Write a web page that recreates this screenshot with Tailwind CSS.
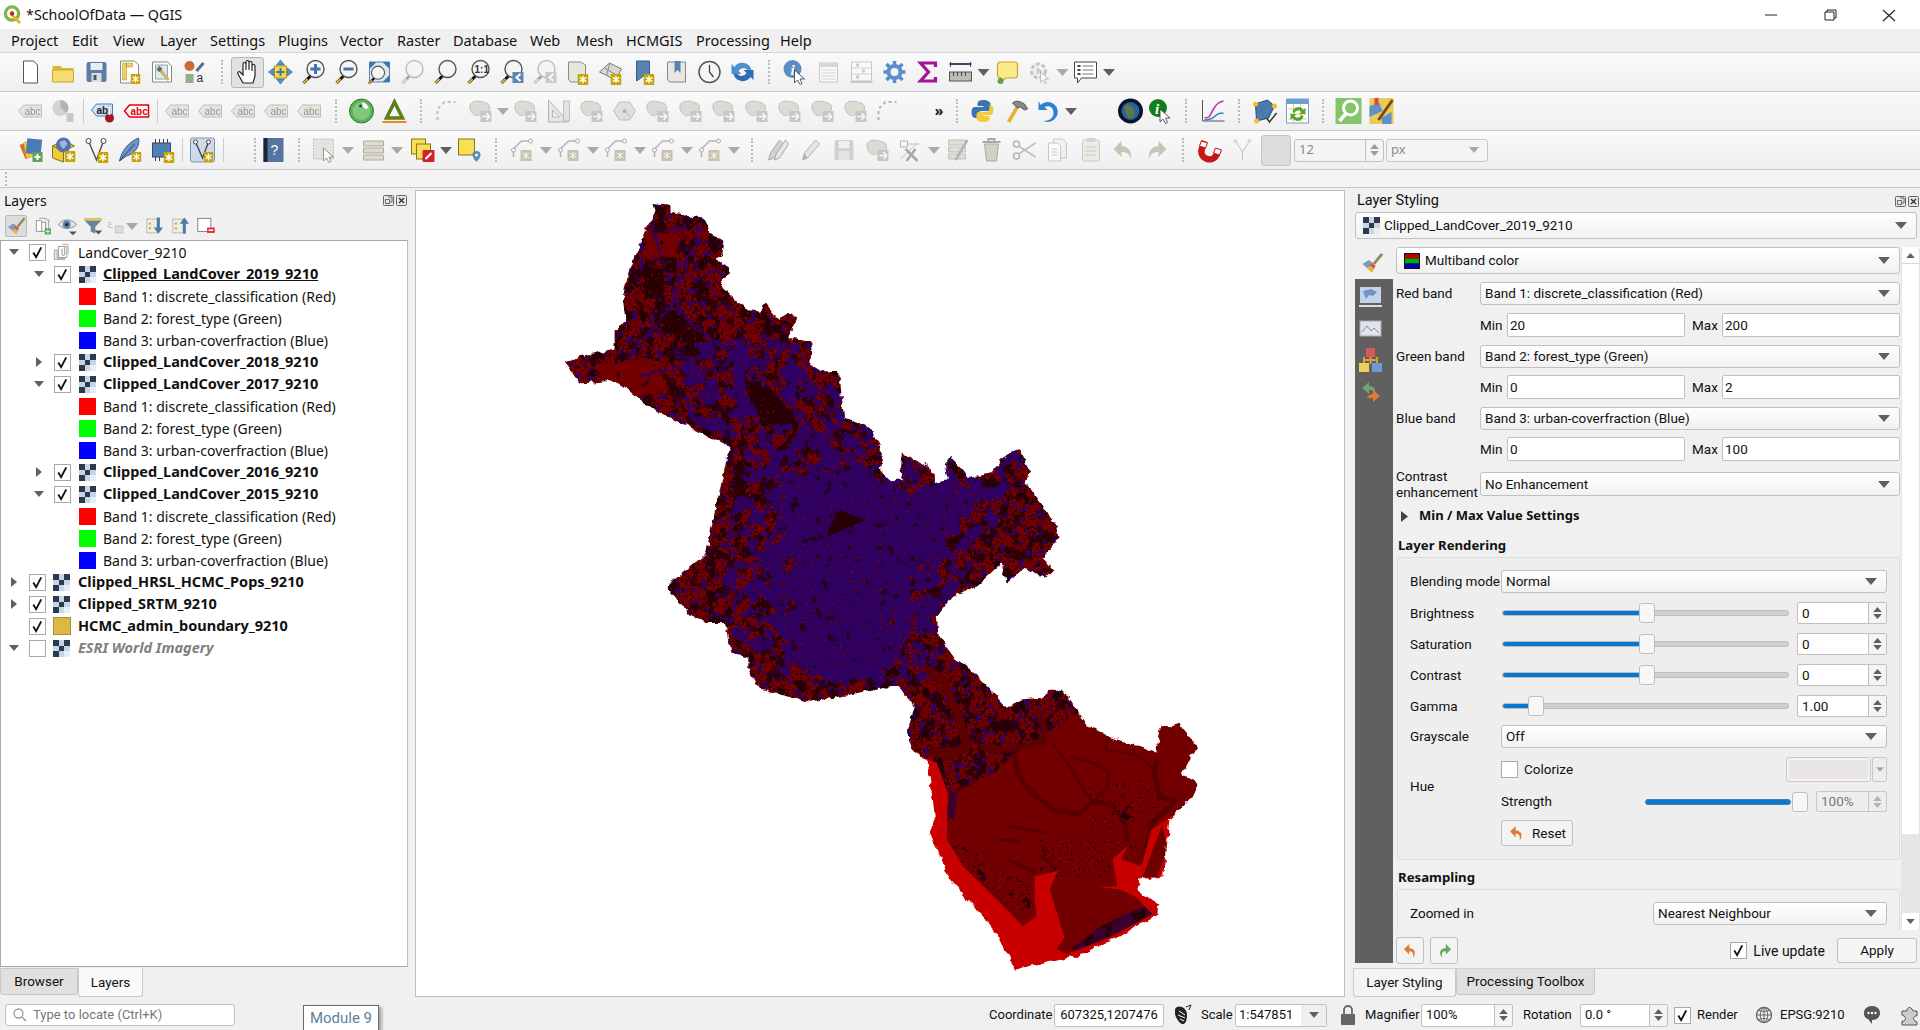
<!DOCTYPE html>
<html><head><meta charset="utf-8"><title>QGIS</title>
<script src="https://cdn.jsdelivr.net/npm/@tailwindcss/browser@4"></script></head>
<body class="w-[1920px] h-[1030px] overflow-hidden bg-[#f0f0f0] text-[14px] text-[#111] font-['Noto_Sans',sans-serif] flex flex-col">
<svg class="absolute w-0 h-0" aria-hidden="true"><defs>
<symbol id="dd" viewBox="0 0 12 7"><path d="M0 0h12L6 7z" fill="#606060"/></symbol>
<symbol id="ck" viewBox="0 0 16 16"><path d="M3.5 8l3 5L12 2.5" fill="none" stroke="#111" stroke-width="2"/></symbol>
<symbol id="ras" viewBox="0 0 17 17"><rect width="17" height="17" fill="#c7d6e6"/><path d="M0 0h6v6H0zM11 0h6v6h-6zM6 6h5v5H6zM0 11h6v6H0z" fill="#2c3a4d"/><path d="M11 11h6v6h-6z" fill="#e6edf5"/></symbol>
<symbol id="st" viewBox="0 0 10 10"><rect width="10" height="10" rx="1" fill="#c9a306"/><path d="M5 1.5v7M2 3l6 4M8 3L2 7" stroke="#fff" stroke-width="1.3"/></symbol>
<symbol id="new" viewBox="0 0 26 26"><path d="M6 2h10l4 4v18H6z" fill="#fff" stroke="#555"/></symbol>
<symbol id="open" viewBox="0 0 26 26"><path d="M2 7h8l2 2h11v14H2z" fill="#d9b93a"/><path d="M2 11h21v12H2z" fill="#f7dc6f" stroke="#c9a52c"/></symbol>
<symbol id="save" viewBox="0 0 26 26"><rect x="3" y="3" width="20" height="20" rx="2" fill="#5c7da3"/><rect x="7" y="4" width="12" height="7" fill="#e8edf2"/><rect x="8" y="14" width="10" height="9" fill="#d9dde2"/><rect x="10" y="16" width="3" height="5" fill="#44586e"/></symbol>
<symbol id="lay" viewBox="0 0 26 26"><path d="M4 2h14l4 4v18H4z" fill="#fff" stroke="#888"/><path d="M6 4h4v17H6zM10 4h6v4h-6z" fill="#edcf5f" stroke="#a98d20" stroke-width=".5"/><use href="#st" x="14" y="15" width="10" height="10"/></symbol>
<symbol id="lm" viewBox="0 0 26 26"><path d="M3 3h15l4 4v16H3z" fill="#fff" stroke="#888"/><path d="M6 6h12v14H6z" fill="#dfe7f2" stroke="#8aa"/><path d="M8 8l11 13" stroke="#d2b356" stroke-width="3"/><path d="M7 11l3-4 3 3-3 3z" fill="#666"/></symbol>
<symbol id="sty" viewBox="0 0 26 26"><circle cx="7" cy="7" r="5" fill="#c96a38"/><rect x="3" y="15" width="8" height="9" fill="#8fb089"/><path d="M14 12l7-8" stroke="#52708f" stroke-width="3"/><text x="14" y="23" font-size="12" font-family="Liberation Sans" fill="#333">a</text></symbol>
<symbol id="hand" viewBox="0 0 26 26"><path d="M8 24l-5-9c-1-2 1-3 2-2l3 3V5c0-2 2-2 3 0v6V3c0-2 3-2 3 0v8V4c0-2 3-2 3 0v8-5c0-2 3-2 3 0v10l-2 7z" fill="#fff" stroke="#222" stroke-width="1.2"/></symbol>
<symbol id="pts" viewBox="0 0 26 26"><path d="M7 7h12v12H7z" fill="#f3dd45" stroke="#a98d20"/><path d="M13 1l4 5H9zM13 25l4-5H9zM1 13l5-4v8zM25 13l-5-4v8z" fill="#5a8fc7" stroke="#2e5c8f" stroke-width=".6"/><path d="M9 13h8M13 9v8" stroke="#3f74ad" stroke-width="2"/></symbol>
<symbol id="mg" viewBox="0 0 26 26"><path d="M3 24l7-7" stroke="#111" stroke-width="3"/><path d="M3 24l4-4" stroke="#e4b92e" stroke-width="2"/><circle cx="15" cy="10" r="8.5" fill="#f5f5f5" stroke="#555" stroke-width="1.4"/></symbol>
<symbol id="zin" viewBox="0 0 26 26"><use href="#mg" width="26" height="26"/><path d="M10 10h10M15 5v10" stroke="#3f74ad" stroke-width="3"/></symbol>
<symbol id="zout" viewBox="0 0 26 26"><use href="#mg" width="26" height="26"/><path d="M10 10h10" stroke="#3f74ad" stroke-width="3"/></symbol>
<symbol id="zfull" viewBox="0 0 26 26"><path d="M3 3h20v20H3z" fill="#dfe7f0" stroke="#5a83ad"/><path d="M3 3h7l-7 7zM23 3h-7l7 7zM23 23h-7l7-7z" fill="#3f74ad"/><use href="#mg" width="20" height="20" y="6"/></symbol>
<symbol id="z11" viewBox="0 0 26 26"><use href="#mg" width="26" height="26"/><text x="9" y="14" font-size="10" font-weight="700" font-family="Liberation Sans" fill="#333">1:1</text></symbol>
<symbol id="zlast" viewBox="0 0 26 26"><use href="#mg" width="26" height="26"/><rect x="14" y="13" width="11" height="11" fill="#5e86b3"/><path d="M22 15l-4 3.5 4 3.5" stroke="#fff" stroke-width="2" fill="none"/></symbol>
<symbol id="map" viewBox="0 0 26 26"><path d="M4 3h12l5 3v17H6l-2-3z" fill="#e6e6e0" stroke="#8a8a80"/><use href="#st" x="13" y="15" width="11" height="11"/></symbol>
<symbol id="map3" viewBox="0 0 26 26"><path d="M2 13L12 4l12 6-6 11z" fill="#d8d8d0" stroke="#777"/><path d="M7 9l12 7M12 5l-3 12" stroke="#888"/><use href="#st" x="13" y="15" width="11" height="11"/></symbol>
<symbol id="bm" viewBox="0 0 26 26"><path d="M6 2h13v20l-6-5-7 5z" fill="#5a83b0" stroke="#355d85"/><use href="#st" x="13" y="15" width="11" height="11"/></symbol>
<symbol id="bm2" viewBox="0 0 26 26"><path d="M4 3h18v20H6l-2-3z" fill="#e8e8e0" stroke="#888"/><path d="M11 2h6v12l-3-3-3 3z" fill="#5a83b0"/></symbol>
<symbol id="clk" viewBox="0 0 26 26"><circle cx="13" cy="13" r="10.5" fill="#f5f5f5" stroke="#555" stroke-width="1.5"/><path d="M13 6v7l4 5" stroke="#444" fill="none" stroke-width="1.3"/></symbol>
<symbol id="ref" viewBox="0 0 26 26"><path d="M22 11A9.5 9.5 0 0 0 5 8L2 5v10h10l-3-3a5.5 5.5 0 0 1 9-1z" fill="#4d8fd1"/><path d="M4 15a9.5 9.5 0 0 0 17 3l3 3V11H14l3 3a5.5 5.5 0 0 1-9 1z" fill="#2c6fb5"/></symbol>
<symbol id="cur" viewBox="0 0 12 16"><path d="M1 1v13l3-3 2.5 4.5 2-1L6.5 10H11z" fill="#fff" stroke="#333" stroke-width=".8"/></symbol>
<symbol id="idn" viewBox="0 0 26 26"><circle cx="10" cy="10" r="9" fill="#5a8dc4"/><text x="8" y="16" font-size="15" font-weight="700" font-style="italic" font-family="Liberation Serif" fill="#fff">i</text><use href="#cur" x="11" y="10" width="12" height="16"/></symbol>
<symbol id="tbl" viewBox="0 0 26 26"><rect x="4" y="4" width="18" height="19" fill="#fff" stroke="#888"/><rect x="4" y="4" width="18" height="4" fill="#aaa"/><path d="M6 11h14M6 14h14M6 17h14M6 20h14" stroke="#aaa"/></symbol>
<symbol id="aba" viewBox="0 0 26 26"><rect x="3" y="3" width="20" height="19" fill="#fff" stroke="#888"/><path d="M3 9h20M3 15h20" stroke="#999"/><circle cx="9" cy="6" r="1.7" fill="#888"/><circle cx="15" cy="12" r="1.7" fill="#888"/><circle cx="9" cy="18" r="1.7" fill="#888"/><rect x="2" y="22" width="22" height="2" fill="#888"/></symbol>
<symbol id="gear" viewBox="0 0 26 26"><circle cx="13" cy="13" r="6" fill="none" stroke="#5b8ec8" stroke-width="4"/><path d="M13 2v22M2 13h22M5 5l16 16M21 5L5 21" stroke="#5b8ec8" stroke-width="3.5"/><circle cx="13" cy="13" r="4" fill="#f4f4f4"/></symbol>
<symbol id="sig" viewBox="0 0 26 26"><path d="M21 8V4H6l8 9-8 9h15v-4" fill="none" stroke="#a0149a" stroke-width="3.2"/></symbol>
<symbol id="rul" viewBox="0 0 26 26"><path d="M2 5h22" stroke="#2f4a6b" stroke-width="2"/><path d="M3 3v5M23 3v5" stroke="#2f4a6b"/><rect x="2" y="13" width="22" height="9" fill="#bbb" stroke="#555"/><path d="M6 13v4M10 13v4M14 13v4M18 13v4" stroke="#444"/></symbol>
<symbol id="tip" viewBox="0 0 26 26"><path d="M6 3h15q3 0 3 3v10q0 3-3 3H12l-3 3-1-3q-4 0-4-3V5z" fill="#fbe98a" stroke="#c9a52c" stroke-width="1.2"/><circle cx="7" cy="22" r="3" fill="#6a9a60"/></symbol>
<symbol id="gpl" viewBox="0 0 26 26"><circle cx="12" cy="12" r="7" fill="#eee" stroke="#888" stroke-width="3" stroke-dasharray="4 2"/><path d="M10 8l6 4-6 4z" fill="#999"/><use href="#cur" x="13" y="12" width="10" height="13"/></symbol>
<symbol id="note" viewBox="0 0 26 26"><path d="M2 3h22v16H9l-4 5v-5H2z" fill="#fff" stroke="#444"/><path d="M5 7h3M5 11h3M5 15h3" stroke="#444" stroke-width="2"/><path d="M10 7h11M10 11h11M10 15h11" stroke="#777"/></symbol>
<symbol id="abc" viewBox="0 0 26 26"><path d="M1 13l5-6h18v12H6z" fill="#dcdcd0" stroke="#999"/><text x="7" y="17" font-size="10" font-family="Liberation Sans" fill="#555">abc</text></symbol>
<symbol id="pie" viewBox="0 0 26 26"><circle cx="10" cy="10" r="8" fill="#bbb"/><path d="M10 2v8l6 5a8 8 0 0 0-6-13z" fill="#888"/><rect x="16" y="15" width="7" height="9" fill="#a8b0a8"/></symbol>
<symbol id="abp" viewBox="0 0 26 26"><path d="M1 12l5-6h16v12H6z" fill="#cfe3f8" stroke="#4a7fb5"/><text x="6" y="16" font-size="10" font-weight="700" font-family="Liberation Sans" fill="#222">ab</text><circle cx="19" cy="20" r="4.5" fill="#a31522"/><rect x="18" y="8" width="2" height="9" fill="#fff" stroke="#999" stroke-width=".4"/></symbol>
<symbol id="abr" viewBox="0 0 26 26"><path d="M1 13l5-6h19v12H6z" fill="#fff" stroke="#e3000f" stroke-width="1.5"/><text x="7" y="17" font-size="10" font-weight="700" font-family="Liberation Sans" fill="#e3000f">abc</text></symbol>
<symbol id="grn" viewBox="0 0 26 26"><circle cx="13" cy="13" r="12" fill="#5fae5c" stroke="#2a7a32"/><circle cx="13" cy="13" r="9" fill="#7fc779"/><path d="M14 4a9 9 0 0 1 6 6l-3 1-3-3z" fill="#fff"/><circle cx="12" cy="8" r="1.5" fill="#245"/></symbol>
<symbol id="tri" viewBox="0 0 26 26"><path d="M13 4l8 16H5z" fill="none" stroke="#5d7f1a" stroke-width="3.5"/><path d="M1 23h24v2H1z" fill="#e98a1f"/></symbol>
<symbol id="dsh" viewBox="0 0 26 26"><path d="M3 22V11l7-7h11" fill="none" stroke="#888" stroke-width="2" stroke-dasharray="3 3"/></symbol>
<symbol id="blob" viewBox="0 0 26 26"><path d="M3 6c3-4 9-3 12-2s7 1 7 6-4 6-7 6-5 3-8 1-6-7-4-11z" fill="#ccc9be" stroke="#999"/><rect x="13" y="13" width="11" height="11" fill="#aaa"/><path d="M15 18.5h7M19 15l3 3.5-3 3.5" stroke="#fff" stroke-width="1.5" fill="none"/></symbol>
<symbol id="sq" viewBox="0 0 26 26"><path d="M3 24V2l20 22zM7 19V12l7 7z" fill="#e0dfd8" fill-rule="evenodd" stroke="#888"/><path d="M18 3h6v20h-6z" fill="#d8d8d0" stroke="#999"/></symbol>
<symbol id="ang" viewBox="0 0 26 26"><path d="M8 22L2 13 8 4h10l6 9-6 9z" fill="#d4d2c8" stroke="#999"/><circle cx="13" cy="13" r="2" fill="#888"/><path d="M13 13l6 6" stroke="#888"/></symbol>
<symbol id="py" viewBox="0 0 26 26"><path d="M13 2c-4 0-6 1-6 4v2h6v1H5c-3 0-4 2-4 5s1 6 4 6h2v-3c0-3 2-4 5-4h5c2 0 3-1 3-3V6c0-2-3-4-7-4z" fill="#3a75b0"/><path d="M13 24c4 0 6-1 6-4v-2h-6v-1h7c2 0 3-2 3-5s-1-5-3-5h-1v3c0 3-2 4-5 4H9c-2 0-3 1-3 3v3c0 3 3 4 7 4z" fill="#f3cc3e"/></symbol>
<symbol id="ham" viewBox="0 0 26 26"><path d="M5 24L15 7" stroke="#e7b02f" stroke-width="3.5"/><path d="M9 5c4-3 7-2 12 1l3 5-3 1-4-3-3 1z" fill="#888" stroke="#555"/></symbol>
<symbol id="und" viewBox="0 0 26 26"><path d="M5 7a10 10 0 1 1 3 16c6 0 10-3 10-8s-4-8-9-6l3 3H3V3z" fill="#2f7fd5"/></symbol>
<symbol id="glb" viewBox="0 0 26 26"><circle cx="13" cy="13" r="12.5" fill="#06152f"/><circle cx="13" cy="13" r="9" fill="#2e5f96"/><path d="M7 8c4-3 7 0 9 3s2 7-2 9-6-4-6-6-2-4-1-6z" fill="#5a7a4a"/></symbol>
<symbol id="idg" viewBox="0 0 26 26"><circle cx="10" cy="10" r="9" fill="#11801c"/><text x="7" y="16" font-size="15" font-weight="700" font-style="italic" font-family="Liberation Serif" fill="#fff">i</text><use href="#cur" x="11" y="10" width="12" height="16"/></symbol>
<symbol id="chart" viewBox="0 0 26 26"><path d="M3 2v21h22" stroke="#555" fill="none"/><path d="M5 20c6 0 6-4 9-9s5-7 10-8" stroke="#c1349b" fill="none" stroke-width="1.5"/><path d="M5 22c6 0 9-2 12-5s4-1 7-2" stroke="#2a8fa8" fill="none" stroke-width="1.5"/></symbol>
<symbol id="nod" viewBox="0 0 26 26"><path d="M4 6l12-4 7 6-6 12-12 3z" fill="#4c79ae" stroke="#27496f"/><circle cx="4" cy="6" r="2.5" fill="#f2c22e"/><circle cx="23" cy="8" r="2.5" fill="#f2c22e"/><circle cx="5" cy="23" r="2.5" fill="#f2c22e"/><path d="M15 20l3 4 7-9" stroke="#333" fill="none" stroke-width="1.5"/></symbol>
<symbol id="tbg" viewBox="0 0 26 26"><rect x="2" y="1" width="22" height="24" fill="#fff" stroke="#6f9fd1"/><rect x="2" y="1" width="22" height="5" fill="#6f9fd1"/><path d="M4 11h18M4 16h18M4 21h18M9 6v19M16 6v19" stroke="#e5c65b"/><path d="M8 14a6 6 0 0 1 11-2l2-2v6h-6l2-2a4 4 0 0 0-7 1zM19 18a6 6 0 0 1-11 2l-2 2v-6h6l-2 2a4 4 0 0 0 7-1z" fill="#4fa53b"/></symbol>
<symbol id="gsq" viewBox="0 0 26 26"><rect width="26" height="26" fill="#85c46a"/><circle cx="15" cy="10" r="7" fill="none" stroke="#fff" stroke-width="3"/><path d="M4 23l7-8" stroke="#fff" stroke-width="3.5"/></symbol>
<symbol id="mpc" viewBox="0 0 26 26"><rect x="1" width="24" height="26" fill="#e9cc55"/><path d="M1 8l10-3 3 8-13 6zM13 20l10-6v12H14z" fill="#5e91c9"/><path d="M6 0h4v7H6z" fill="#d44"/><path d="M10 22L24 2" stroke="#7a4a1c" stroke-width="3"/></symbol>
<symbol id="addl" viewBox="0 0 26 26"><path d="M2 8l7-3 5 15-6 2z" fill="#d6702c"/><path d="M6 5l10-2 2 16-9 2z" fill="#f0ca3c"/><rect x="9" y="2" width="15" height="15" fill="#4b7bb5" transform="rotate(6 16 9)"/><rect x="15" y="15" width="10" height="10" fill="#5f9e5c"/><path d="M20 17v6M17 20h6" stroke="#fff" stroke-width="2"/></symbol>
<symbol id="wms" viewBox="0 0 26 26"><path d="M2 9l11-6 11 6-11 5z" fill="#e9c93c" stroke="#8a7120"/><path d="M2 9v12l11 4V14z" fill="#eccb35" stroke="#8a7120"/><circle cx="13" cy="8" r="7.5" fill="#4f75a8"/><path d="M9 5l5-2 3 4-4 5-3-3z" fill="#9db8d6"/><use href="#st" x="14" y="14" width="11" height="11"/></symbol>
<symbol id="vv" viewBox="0 0 26 26"><path d="M5 4l8 19 7-19" fill="none" stroke="#555" stroke-width="1.5"/><circle cx="5" cy="4" r="2.5" fill="#fff" stroke="#444"/><circle cx="20" cy="4" r="2.5" fill="#fff" stroke="#444"/><use href="#st" x="14" y="15" width="11" height="11"/></symbol>
<symbol id="fth" viewBox="0 0 26 26"><path d="M3 24C5 14 12 5 22 1c2 8-4 16-12 18z" fill="#6d94c2" stroke="#3d5f88"/><path d="M3 24L18 7" stroke="#2f4a6b"/><use href="#st" x="15" y="15" width="10" height="10"/></symbol>
<symbol id="chip" viewBox="0 0 26 26"><rect x="3" y="6" width="18" height="14" fill="#4f7fb3" stroke="#2f4a6b"/><path d="M6 2v4M10 2v4M14 2v4M18 2v4M6 20v4M10 20v4" stroke="#444"/><use href="#st" x="14" y="15" width="11" height="11"/></symbol>
<symbol id="vsel" viewBox="0 0 26 26"><rect x="1" y="1" width="24" height="24" rx="2" fill="#cfdae8" stroke="#7b94b3"/><path d="M6 5l7 16 6-16" fill="none" stroke="#445" stroke-width="1.4"/><circle cx="6" cy="5" r="2" fill="#fff" stroke="#444"/><circle cx="19" cy="5" r="2" fill="#fff" stroke="#444"/><use href="#st" x="14" y="15" width="10" height="10"/></symbol>
<symbol id="help" viewBox="0 0 26 26"><rect x="3" y="1" width="20" height="24" fill="#5375a0"/><rect x="3" y="1" width="4" height="24" fill="#223"/><text x="10" y="18" font-size="14" font-family="Liberation Sans" fill="#fff">?</text></symbol>
<symbol id="sel" viewBox="0 0 26 26"><rect x="2" y="2" width="20" height="20" fill="#d9d8ce" stroke="#999" stroke-dasharray="2 1"/><use href="#cur" x="11" y="10" width="12" height="16"/></symbol>
<symbol id="stk" viewBox="0 0 26 26"><path d="M3 4h20v5H3zM3 11h20v5H3zM3 18h20v5H3z" fill="#dedcc9" stroke="#aaa"/></symbol>
<symbol id="dsl" viewBox="0 0 26 26"><rect x="2" y="2" width="14" height="15" fill="#f8df55" stroke="#8b7414"/><rect x="7" y="7" width="14" height="15" fill="#f8df55" stroke="#8b7414"/><rect x="13" y="13" width="12" height="12" rx="1" fill="#d4232b"/><path d="M16 22l6-6" stroke="#fff" stroke-width="2"/></symbol>
<symbol id="loc" viewBox="0 0 26 26"><rect x="2" y="2" width="16" height="16" fill="#f8df55" stroke="#8b7414"/><path d="M20 14a4 4 0 0 1 4 4c0 3-4 7-4 7s-4-4-4-7a4 4 0 0 1 4-4z" fill="#5a8db7"/><circle cx="20" cy="18" r="1.5" fill="#fff"/></symbol>
<symbol id="npt" viewBox="0 0 26 26"><path d="M4 20v-8l8-8h8" fill="none" stroke="#999" stroke-width="1.5"/><circle cx="21" cy="4" r="2" fill="#fff" stroke="#888"/><circle cx="4" cy="13" r="2" fill="#fff" stroke="#888"/><rect x="11" y="13" width="11" height="11" fill="#b3ae92"/><path d="M16.5 15v7M13 16l7 5M20 16l-7 5" stroke="#fff"/></symbol>
<symbol id="pen" viewBox="0 0 26 26"><path d="M4 23l2-7L17 3l4 4L9 21z" fill="#ddd" stroke="#888"/><path d="M4 23l2-7 3 5z" fill="#888"/></symbol>
<symbol id="pens" viewBox="0 0 26 26"><path d="M3 23l2-7L14 3l4 4-9 14z" fill="#bbb" stroke="#777"/><path d="M9 23l2-7 9-13 3 4-9 14z" fill="#ddd" stroke="#777"/></symbol>
<symbol id="flp" viewBox="0 0 26 26"><rect x="3" y="3" width="19" height="20" rx="2" fill="#c3c3bd"/><rect x="7" y="4" width="11" height="7" fill="#eee"/><rect x="7" y="14" width="11" height="9" fill="#ddd"/></symbol>
<symbol id="vt" viewBox="0 0 26 26"><path d="M3 4h7v6H3z" fill="none" stroke="#888"/><path d="M10 7h12M3 22L20 6" stroke="#999"/><path d="M8 12l12 12M18 12l-9 12" stroke="#777" stroke-width="2.5"/></symbol>
<symbol id="dl" viewBox="0 0 26 26"><path d="M6 7h14l-2 17H8z" fill="#c5c2b8" stroke="#888"/><path d="M4 5h18M10 4V2h6v2" stroke="#888" stroke-width="2" fill="none"/></symbol>
<symbol id="ed" viewBox="0 0 26 26"><path d="M3 3h17v5H3zM3 10h17v5H3zM3 17h17v5H3z" fill="#d8d6c0" stroke="#aaa"/><path d="M10 23L22 3" stroke="#999" stroke-width="2.5"/></symbol>
<symbol id="cut" viewBox="0 0 26 26"><circle cx="5" cy="19" r="3" fill="none" stroke="#888" stroke-width="1.5"/><circle cx="5" cy="7" r="3" fill="none" stroke="#888" stroke-width="1.5"/><path d="M7 9l17 11M7 17L24 6" stroke="#999" stroke-width="1.5"/></symbol>
<symbol id="cpy" viewBox="0 0 26 26"><path d="M9 2h9l4 4v15H9z" fill="#eee" stroke="#aaa"/><path d="M4 6h9l3 3v15H4z" fill="#fff" stroke="#aaa"/><path d="M7 12h6M7 15h6M7 18h6" stroke="#aaa"/></symbol>
<symbol id="pst" viewBox="0 0 26 26"><rect x="5" y="3" width="17" height="21" rx="2" fill="#e8e6da" stroke="#aaa"/><rect x="9" y="1" width="9" height="4" fill="#bbb"/><path d="M8 10h11M8 14h11M8 18h11" stroke="#aaa"/></symbol>
<symbol id="uu" viewBox="0 0 26 26"><path d="M11 4L3 12l8 8v-5c5 0 8 1 9 7 2-8-2-12-9-13z" fill="#c9c4b8"/></symbol>
<symbol id="rr" viewBox="0 0 26 26"><path d="M15 4l8 8-8 8v-5c-5 0-8 1-9 7-2-8 2-12 9-13z" fill="#c9c4b8"/></symbol>
<symbol id="uo" viewBox="0 0 26 26"><path d="M11 3L3 11l8 8v-5c4 0 7 1 6 10 5-8 3-14-6-15z" fill="#e17b33"/></symbol>
<symbol id="rg" viewBox="0 0 26 26"><path d="M15 3l8 8-8 8v-5c-4 0-7 1-6 10-5-8-3-14 6-15z" fill="#6ba56b"/></symbol>
<symbol id="mag" viewBox="0 0 26 26"><path d="M8 4L5 13a8 8 0 0 0 15 5l2-6" fill="none" stroke="#c9141c" stroke-width="6.5"/><path d="M5 4l6 2-2 5-6-2zM19 11l6 2-2 5-6-2z" fill="#fff" stroke="#c9141c"/></symbol>
<symbol id="snp" viewBox="0 0 26 26"><path d="M6 4l7 11 7-11M13 15v8" stroke="#aaa" fill="none"/><circle cx="6" cy="4" r="2" fill="#ccc"/><circle cx="20" cy="4" r="2" fill="#ccc"/></symbol>
<symbol id="brush" viewBox="0 0 26 26"><path d="M3 14l10 9 4-7-7-6z" fill="#cc5a67"/><path d="M3 14l6-4 4 3-6 5z" fill="#6f9ed1"/><path d="M7 18l6 5 2-4-4-3z" fill="#e0b63e"/><path d="M15 14l9-11" stroke="#8b8a5a" stroke-width="3"/></symbol>
<symbol id="addg" viewBox="0 0 26 26"><path d="M5 6h6l1 2h5v12H5z" fill="#fff" stroke="#777"/><path d="M9 3h8l1 2h3v12" fill="none" stroke="#888"/><path d="M12 8v12" stroke="#777"/><rect x="16" y="16" width="8" height="8" fill="#5da55a"/><path d="M20 17v6M17 20h6" stroke="#fff"/></symbol>
<symbol id="eye" viewBox="0 0 26 26"><path d="M1 11c7-8 16-8 24 0-8 7-17 7-24 0z" fill="#e4e4e4" stroke="#777"/><circle cx="12" cy="11" r="5" fill="#5a7da5"/><circle cx="12" cy="11" r="2" fill="#222"/><path d="M15 20h10l-5 5z" fill="#555"/></symbol>
<symbol id="flt" viewBox="0 0 26 26"><path d="M2 3h22v3l-8 8v9l-6-3v-6L2 6z" fill="#66839f"/><path d="M2 3h22v3H2z" fill="#edd04c"/><path d="M15 19h10l-5 5z" fill="#555"/></symbol>
<symbol id="eps" viewBox="0 0 26 26"><text x="2" y="15" font-size="17" font-family="Liberation Serif" fill="#bbb">ε</text><path d="M12 13h10v9H12z" fill="#ddd" stroke="#bbb"/></symbol>
<symbol id="exd" viewBox="0 0 26 26"><rect x="3" y="4" width="14" height="18" fill="#f0eee0" stroke="#888" stroke-dasharray="2 1"/><path d="M16 2v13h-4l6 8 6-8h-4V2z" fill="#4c7aab"/><circle cx="7" cy="10" r="1.5" fill="#e39a2c"/><circle cx="7" cy="16" r="1.5" fill="#e39a2c"/></symbol>
<symbol id="exu" viewBox="0 0 26 26"><rect x="3" y="4" width="14" height="18" fill="#f0eee0" stroke="#888" stroke-dasharray="2 1"/><path d="M16 23V10h-4l6-8 6 8h-4v13z" fill="#4c7aab"/><circle cx="7" cy="10" r="1.5" fill="#e39a2c"/><circle cx="7" cy="16" r="1.5" fill="#e39a2c"/></symbol>
<symbol id="rem" viewBox="0 0 26 26"><rect x="3" y="3" width="17" height="17" fill="#fff" stroke="#666"/><rect x="15" y="15" width="10" height="7" fill="#d8343c"/><path d="M17 18.5h6" stroke="#fff" stroke-width="2"/></symbol>
<symbol id="grp" viewBox="0 0 26 26"><path d="M2 10h4v12h11v2H2z" fill="#e8e8e8" stroke="#888"/><path d="M8 5h12v16H8z" fill="#fff" stroke="#777"/><path d="M13 2h9v14" fill="none" stroke="#999"/><path d="M13 8v8a2 2 0 0 0 4 0V6" stroke="#666" fill="none"/></symbol>
</defs></svg>

<!-- title -->
<header class="h-[29px] bg-white flex items-center shrink-0 relative">
<svg class="w-[19px] h-[19px] ml-[3px]" viewBox="0 0 20 20"><circle cx="9.5" cy="9" r="7" fill="none" stroke="#83b444" stroke-width="3.5"/><path d="M9 10l9 9" stroke="#e7b52c" stroke-width="3"/><circle cx="9.5" cy="9" r="2.3" fill="#b62c2c"/></svg>
<span class="ml-[4px] text-[14.3px]">*SchoolOfData — QGIS</span>
<div class="ml-auto flex items-center">
<svg class="w-[58px] h-[14px]" viewBox="0 0 58 14"><path d="M23 7h12" stroke="#222"/></svg>
<svg class="w-[58px] h-[14px]" viewBox="0 0 58 14"><path d="M25 4h9v8h-9zM27 4V2h9v8h-2" fill="none" stroke="#222"/></svg>
<svg class="w-[62px] h-[14px]" viewBox="0 0 62 14"><path d="M25 2l12 11M37 2L25 13" stroke="#222" stroke-width="1.1"/></svg>
</div></header>

<!-- menu -->
<nav class="h-[24px] flex items-center text-[14.5px] shrink-0 bg-[#f0f0f0] border-b border-[#d8d8d8]">
<span class="ml-[11px] w-[61px]">Project</span><span class="w-[41px]">Edit</span><span class="w-[47px]">View</span><span class="w-[50px]">Layer</span><span class="w-[68px]">Settings</span><span class="w-[62px]">Plugins</span><span class="w-[57px]">Vector</span><span class="w-[56px]">Raster</span><span class="w-[77px]">Database</span><span class="w-[46px]">Web</span><span class="w-[50px]">Mesh</span><span class="w-[70px]">HCMGIS</span><span class="w-[84px]">Processing</span><span>Help</span>
</nav>

<!-- toolbar 1 -->
<div class="h-[39px] shrink-0 flex items-center pl-[14px] border-b border-[#c8c8c8] bg-linear-to-b from-[#fafafa] to-[#efefef]">
<svg class="w-[33px] h-[26px]"><use href="#new"/></svg><svg class="w-[33px] h-[26px]"><use href="#open"/></svg><svg class="w-[33px] h-[26px]"><use href="#save"/></svg><svg class="w-[33px] h-[26px]"><use href="#lay"/></svg><svg class="w-[33px] h-[26px]"><use href="#lm"/></svg><svg class="w-[33px] h-[26px]"><use href="#sty"/></svg>
<div class="w-[19px] flex justify-center"><i class="h-[24px] border-l-[2px] border-dotted border-[#bbb]"></i></div>
<div class="w-[33px] h-[31px] rounded-[3px] bg-[#e2e2e2] border border-[#b5b5b5] flex items-center justify-center"><svg class="w-[26px] h-[26px]"><use href="#hand"/></svg></div>
<svg class="w-[33px] h-[26px]"><use href="#pts"/></svg><svg class="w-[33px] h-[26px]"><use href="#zin"/></svg><svg class="w-[33px] h-[26px]"><use href="#zout"/></svg><svg class="w-[33px] h-[26px]"><use href="#zfull"/></svg><svg class="w-[33px] h-[26px] opacity-35 grayscale"><use href="#mg"/></svg><svg class="w-[33px] h-[26px]"><use href="#mg"/></svg><svg class="w-[33px] h-[26px]"><use href="#z11"/></svg><svg class="w-[33px] h-[26px]"><use href="#zlast"/></svg><svg class="w-[33px] h-[26px] opacity-35 grayscale"><use href="#zlast"/></svg><svg class="w-[33px] h-[26px]"><use href="#map"/></svg><svg class="w-[33px] h-[26px]"><use href="#map3"/></svg><svg class="w-[33px] h-[26px]"><use href="#bm"/></svg><svg class="w-[33px] h-[26px]"><use href="#bm2"/></svg><svg class="w-[33px] h-[26px]"><use href="#clk"/></svg><svg class="w-[33px] h-[26px]"><use href="#ref"/></svg>
<div class="w-[20px] flex justify-center"><i class="h-[24px] border-l-[2px] border-dotted border-[#bbb]"></i></div>
<svg class="w-[33px] h-[26px]"><use href="#idn"/></svg><svg class="w-[33px] h-[26px] opacity-40"><use href="#tbl"/></svg><svg class="w-[33px] h-[26px] opacity-40"><use href="#aba"/></svg><svg class="w-[33px] h-[26px]"><use href="#gear"/></svg><svg class="w-[33px] h-[26px]"><use href="#sig"/></svg><svg class="w-[33px] h-[26px]"><use href="#rul"/></svg>
<svg class="w-[13px] h-[7px]"><use href="#dd"/></svg>
<svg class="w-[33px] h-[26px]"><use href="#tip"/></svg><svg class="w-[33px] h-[26px] opacity-45"><use href="#gpl"/></svg>
<svg class="w-[13px] h-[7px] opacity-50"><use href="#dd"/></svg>
<svg class="w-[33px] h-[26px]"><use href="#note"/></svg>
<svg class="w-[14px] h-[7px]"><use href="#dd"/></svg>
</div>

<!-- toolbar 2 -->
<div class="h-[39px] shrink-0 flex items-center pl-[14px] border-b border-[#c8c8c8] bg-linear-to-b from-[#fafafa] to-[#efefef]">
<svg class="w-[33px] h-[26px] opacity-60"><use href="#abc"/></svg><svg class="w-[33px] h-[26px] opacity-60"><use href="#pie"/></svg>
<div class="w-[7px] flex justify-center"><i class="h-[24px] border-l border-[#ccc]"></i></div>
<svg class="w-[33px] h-[26px]"><use href="#abp"/></svg><svg class="w-[33px] h-[26px]"><use href="#abr"/></svg>
<div class="w-[8px] flex justify-center"><i class="h-[24px] border-l border-[#ccc]"></i></div>
<svg class="w-[33px] h-[26px] opacity-60"><use href="#abc"/></svg><svg class="w-[33px] h-[26px] opacity-60"><use href="#abc"/></svg><svg class="w-[33px] h-[26px] opacity-60"><use href="#abc"/></svg><svg class="w-[33px] h-[26px] opacity-60"><use href="#abc"/></svg><svg class="w-[33px] h-[26px] opacity-60"><use href="#abc"/></svg>
<div class="w-[19px] flex justify-center"><i class="h-[24px] border-l-[2px] border-dotted border-[#bbb]"></i></div>
<svg class="w-[33px] h-[26px]"><use href="#grn"/></svg><svg class="w-[33px] h-[26px]"><use href="#tri"/></svg>
<div class="w-[20px] flex justify-center"><i class="h-[24px] border-l-[2px] border-dotted border-[#bbb]"></i></div>
<svg class="w-[33px] h-[26px] opacity-50"><use href="#dsh"/></svg><svg class="w-[33px] h-[26px] opacity-60"><use href="#blob"/></svg>
<svg class="w-[12px] h-[7px] opacity-50"><use href="#dd"/></svg>
<svg class="w-[33px] h-[26px] opacity-60"><use href="#blob"/></svg><svg class="w-[33px] h-[26px] opacity-60"><use href="#sq"/></svg><svg class="w-[33px] h-[26px] opacity-60"><use href="#blob"/></svg><svg class="w-[33px] h-[26px] opacity-60"><use href="#ang"/></svg><svg class="w-[33px] h-[26px] opacity-60"><use href="#blob"/></svg><svg class="w-[33px] h-[26px] opacity-60"><use href="#blob"/></svg><svg class="w-[33px] h-[26px] opacity-60"><use href="#blob"/></svg><svg class="w-[33px] h-[26px] opacity-60"><use href="#blob"/></svg><svg class="w-[33px] h-[26px] opacity-60"><use href="#blob"/></svg><svg class="w-[33px] h-[26px] opacity-60"><use href="#blob"/></svg><svg class="w-[33px] h-[26px] opacity-60"><use href="#blob"/></svg><svg class="w-[33px] h-[26px] opacity-60"><use href="#dsh"/></svg>
<span class="ml-[26px] w-[16px] text-center text-[14px] font-bold leading-none">»</span>
<div class="w-[20px] flex justify-center"><i class="h-[24px] border-l-[2px] border-dotted border-[#bbb]"></i></div>
<svg class="w-[33px] h-[26px]"><use href="#py"/></svg><svg class="w-[33px] h-[26px]"><use href="#ham"/></svg><svg class="w-[31px] h-[26px]"><use href="#und"/></svg>
<svg class="w-[14px] h-[7px]"><use href="#dd"/></svg>
<svg class="w-[33px] h-[26px] ml-[36px]"><use href="#glb"/></svg><svg class="w-[28px] h-[26px]"><use href="#idg"/></svg>
<div class="w-[21px] flex justify-center"><i class="h-[24px] border-l-[2px] border-dotted border-[#bbb]"></i></div>
<svg class="w-[33px] h-[26px]"><use href="#chart"/></svg>
<div class="w-[19px] flex justify-center"><i class="h-[24px] border-l-[2px] border-dotted border-[#bbb]"></i></div>
<svg class="w-[33px] h-[26px]"><use href="#nod"/></svg><svg class="w-[33px] h-[26px]"><use href="#tbg"/></svg>
<div class="w-[18px] flex justify-center"><i class="h-[24px] border-l-[2px] border-dotted border-[#bbb]"></i></div>
<svg class="w-[33px] h-[26px]"><use href="#gsq"/></svg><svg class="w-[33px] h-[26px]"><use href="#mpc"/></svg>
</div>

<!-- toolbar 3 -->
<div class="h-[39px] shrink-0 flex items-center pl-[14px] border-b border-[#c8c8c8] bg-linear-to-b from-[#fafafa] to-[#efefef]">
<svg class="w-[33px] h-[26px]"><use href="#addl"/></svg><svg class="w-[33px] h-[26px]"><use href="#wms"/></svg><svg class="w-[33px] h-[26px]"><use href="#vv"/></svg><svg class="w-[33px] h-[26px]"><use href="#fth"/></svg><svg class="w-[33px] h-[26px]"><use href="#chip"/></svg>
<div class="w-[7px] flex justify-center"><i class="h-[24px] border-l border-[#ccc]"></i></div>
<svg class="w-[33px] h-[26px]"><use href="#vsel"/></svg>
<div class="w-[8px] flex justify-center"><i class="h-[24px] border-l border-[#ccc]"></i></div>
<div class="w-[30px] flex justify-center"><i class="h-[24px] border-l-[2px] border-dotted border-[#bbb] ml-[26px]"></i></div>
<svg class="w-[33px] h-[26px]"><use href="#help"/></svg>
<div class="w-[18px] flex justify-center"><i class="h-[24px] border-l-[2px] border-dotted border-[#bbb]"></i></div>
<svg class="w-[33px] h-[26px] opacity-60"><use href="#sel"/></svg><svg class="w-[14px] h-[7px] opacity-50"><use href="#dd"/></svg>
<svg class="w-[33px] h-[26px] ml-[2px]"><use href="#stk"/></svg><svg class="w-[14px] h-[7px] opacity-50"><use href="#dd"/></svg>
<svg class="w-[33px] h-[26px] ml-[2px]"><use href="#dsl"/></svg><svg class="w-[14px] h-[7px]"><use href="#dd"/></svg>
<svg class="w-[33px] h-[26px]"><use href="#loc"/></svg>
<div class="w-[20px] flex justify-center"><i class="h-[24px] border-l-[2px] border-dotted border-[#bbb]"></i></div>
<svg class="w-[33px] h-[26px] opacity-70"><use href="#npt"/></svg><svg class="w-[14px] h-[7px] opacity-50"><use href="#dd"/></svg>
<svg class="w-[33px] h-[26px] opacity-70"><use href="#npt"/></svg><svg class="w-[14px] h-[7px] opacity-50"><use href="#dd"/></svg>
<svg class="w-[33px] h-[26px] opacity-70"><use href="#npt"/></svg><svg class="w-[14px] h-[7px] opacity-50"><use href="#dd"/></svg>
<svg class="w-[33px] h-[26px] opacity-70"><use href="#npt"/></svg><svg class="w-[14px] h-[7px] opacity-50"><use href="#dd"/></svg>
<svg class="w-[33px] h-[26px] opacity-70"><use href="#npt"/></svg><svg class="w-[14px] h-[7px] opacity-50"><use href="#dd"/></svg>
<div class="w-[21px] flex justify-center"><i class="h-[24px] border-l-[2px] border-dotted border-[#bbb]"></i></div>
<svg class="w-[33px] h-[26px] opacity-60"><use href="#pens"/></svg><svg class="w-[33px] h-[26px] opacity-60"><use href="#pen"/></svg><svg class="w-[33px] h-[26px] opacity-70"><use href="#flp"/></svg><svg class="w-[33px] h-[26px] opacity-60"><use href="#blob"/></svg><svg class="w-[33px] h-[26px] opacity-60"><use href="#vt"/></svg><svg class="w-[14px] h-[7px] opacity-50"><use href="#dd"/></svg>
<svg class="w-[33px] h-[26px] ml-[1px] opacity-70"><use href="#ed"/></svg><svg class="w-[33px] h-[26px] opacity-70"><use href="#dl"/></svg><svg class="w-[33px] h-[26px] opacity-60"><use href="#cut"/></svg><svg class="w-[33px] h-[26px] opacity-60"><use href="#cpy"/></svg><svg class="w-[33px] h-[26px] opacity-60"><use href="#pst"/></svg><svg class="w-[33px] h-[26px]"><use href="#uu"/></svg><svg class="w-[33px] h-[26px]"><use href="#rr"/></svg>
<div class="w-[20px] flex justify-center"><i class="h-[24px] border-l-[2px] border-dotted border-[#bbb]"></i></div>
<svg class="w-[33px] h-[26px]"><use href="#mag"/></svg><svg class="w-[33px] h-[26px] opacity-70"><use href="#snp"/></svg>
<div class="w-[30px] h-[31px] ml-[2px] rounded-[3px] bg-[#dcdcdc] border border-[#c4c4c4]"></div>
<div class="ml-[3px] w-[90px] h-[23px] rounded-[3px] border border-[#c0c0c0] bg-[#f4f4f4] flex items-center text-[#8a8a8a] text-[13px] pl-[4px]">12<span class="ml-auto h-full w-[18px] border-l border-[#c0c0c0] flex flex-col items-center justify-center gap-[2px]"><svg class="w-[9px] h-[5px] rotate-180 opacity-60"><use href="#dd"/></svg><svg class="w-[9px] h-[5px] opacity-60"><use href="#dd"/></svg></span></div>
<div class="ml-[2px] w-[102px] h-[23px] rounded-[3px] border border-[#c8c8c8] bg-[#f4f4f4] flex items-center text-[#8a8a8a] text-[13px] pl-[4px]">px<svg class="ml-auto mr-[8px] w-[10px] h-[6px] opacity-50"><use href="#dd"/></svg></div>
</div>

<!-- toolbar 4 -->
<div class="h-[18px] shrink-0 flex items-center pl-[5px] border-b border-[#c8c8c8] bg-[#f4f4f4]"><i class="h-[14px] border-l-[2px] border-dotted border-[#bbb]"></i></div>

<!-- main -->
<main class="h-[812px] shrink-0 flex">
<!-- left dock -->
<section class="w-[415px] shrink-0 flex flex-col">
 <div class="h-[24px] shrink-0 flex items-center pl-[4px] text-[14px]">Layers
  <svg class="ml-auto w-[11px] h-[11px]" viewBox="0 0 11 11"><rect x=".5" y=".5" width="10" height="10" rx="1" fill="#e8e8e8" stroke="#666"/><path d="M5 2h4v5H7M2.5 4.5h4v4h-4z" fill="none" stroke="#666"/></svg>
  <svg class="ml-[2px] mr-[8px] w-[11px] h-[11px]" viewBox="0 0 11 11"><rect x=".5" y=".5" width="10" height="10" rx="1" fill="#e8e8e8" stroke="#666"/><path d="M3 3l5 5M8 3L3 8" stroke="#333" stroke-width="1.4"/></svg>
 </div>
 <div class="h-[28px] shrink-0 flex items-center pl-[5px]">
  <div class="w-[22px] h-[22px] rounded-[2px] bg-[#dcdcdc] border border-[#bbb] flex items-center justify-center"><svg class="w-[20px] h-[20px]"><use href="#brush"/></svg></div>
  <svg class="w-[25px] h-[20px] ml-[3px]"><use href="#addg"/></svg><svg class="w-[25px] h-[20px]"><use href="#eye"/></svg><svg class="w-[26px] h-[20px]"><use href="#flt"/></svg><svg class="w-[20px] h-[20px]"><use href="#eps"/></svg><svg class="w-[12px] h-[7px] opacity-50"><use href="#dd"/></svg>
  <svg class="w-[27px] h-[20px] ml-[3px]"><use href="#exd"/></svg><svg class="w-[25px] h-[20px]"><use href="#exu"/></svg><svg class="w-[25px] h-[20px]"><use href="#rem"/></svg>
 </div>
 <div class="w-[408px] h-[727px] shrink-0 bg-white border border-[#a8a8a8] border-r-[#bbb] flex flex-col overflow-hidden text-[14px]">
  <div class="h-[22px] flex items-center pl-[8px]"><svg class="w-[10px] h-[6px] mr-[10px]"><use href="#dd"/></svg><span class="w-[17px] h-[17px] border border-[#a9a9a9] mr-[7px]"><svg class="w-[15px] h-[15px]"><use href="#ck"/></svg></span><svg class="w-[18px] h-[18px] mr-[7px]"><use href="#grp"/></svg><span>LandCover_9210</span></div>
  <div class="h-[22px] flex items-center pl-[33px]"><svg class="w-[10px] h-[6px] mr-[10px]"><use href="#dd"/></svg><span class="w-[17px] h-[17px] border border-[#a9a9a9] mr-[8px]"><svg class="w-[15px] h-[15px]"><use href="#ck"/></svg></span><svg class="w-[17px] h-[17px] mr-[7px]"><use href="#ras"/></svg><span class="font-bold underline text-[14.5px]">Clipped_LandCover_2019_9210</span></div>
  <div class="h-[22px] flex items-center pl-[78px]"><i class="w-[17px] h-[17px] mr-[7px] bg-[#ff0000]"></i>Band 1: discrete_classification (Red)</div>
  <div class="h-[22px] flex items-center pl-[78px]"><i class="w-[17px] h-[17px] mr-[7px] bg-[#00ff00]"></i>Band 2: forest_type (Green)</div>
  <div class="h-[22px] flex items-center pl-[78px]"><i class="w-[17px] h-[17px] mr-[7px] bg-[#0000ff]"></i>Band 3: urban-coverfraction (Blue)</div>
  <div class="h-[22px] flex items-center pl-[35px]"><svg class="w-[6px] h-[10px] mr-[12px]" viewBox="0 0 6 10"><path d="M0 0l6 5-6 5z" fill="#606060"/></svg><span class="w-[17px] h-[17px] border border-[#a9a9a9] mr-[8px]"><svg class="w-[15px] h-[15px]"><use href="#ck"/></svg></span><svg class="w-[17px] h-[17px] mr-[7px]"><use href="#ras"/></svg><span class="font-bold text-[14.5px]">Clipped_LandCover_2018_9210</span></div>
  <div class="h-[22px] flex items-center pl-[33px]"><svg class="w-[10px] h-[6px] mr-[10px]"><use href="#dd"/></svg><span class="w-[17px] h-[17px] border border-[#a9a9a9] mr-[8px]"><svg class="w-[15px] h-[15px]"><use href="#ck"/></svg></span><svg class="w-[17px] h-[17px] mr-[7px]"><use href="#ras"/></svg><span class="font-bold text-[14.5px]">Clipped_LandCover_2017_9210</span></div>
  <div class="h-[22px] flex items-center pl-[78px]"><i class="w-[17px] h-[17px] mr-[7px] bg-[#ff0000]"></i>Band 1: discrete_classification (Red)</div>
  <div class="h-[22px] flex items-center pl-[78px]"><i class="w-[17px] h-[17px] mr-[7px] bg-[#00ff00]"></i>Band 2: forest_type (Green)</div>
  <div class="h-[22px] flex items-center pl-[78px]"><i class="w-[17px] h-[17px] mr-[7px] bg-[#0000ff]"></i>Band 3: urban-coverfraction (Blue)</div>
  <div class="h-[22px] flex items-center pl-[35px]"><svg class="w-[6px] h-[10px] mr-[12px]" viewBox="0 0 6 10"><path d="M0 0l6 5-6 5z" fill="#606060"/></svg><span class="w-[17px] h-[17px] border border-[#a9a9a9] mr-[8px]"><svg class="w-[15px] h-[15px]"><use href="#ck"/></svg></span><svg class="w-[17px] h-[17px] mr-[7px]"><use href="#ras"/></svg><span class="font-bold text-[14.5px]">Clipped_LandCover_2016_9210</span></div>
  <div class="h-[22px] flex items-center pl-[33px]"><svg class="w-[10px] h-[6px] mr-[10px]"><use href="#dd"/></svg><span class="w-[17px] h-[17px] border border-[#a9a9a9] mr-[8px]"><svg class="w-[15px] h-[15px]"><use href="#ck"/></svg></span><svg class="w-[17px] h-[17px] mr-[7px]"><use href="#ras"/></svg><span class="font-bold text-[14.5px]">Clipped_LandCover_2015_9210</span></div>
  <div class="h-[22px] flex items-center pl-[78px]"><i class="w-[17px] h-[17px] mr-[7px] bg-[#ff0000]"></i>Band 1: discrete_classification (Red)</div>
  <div class="h-[22px] flex items-center pl-[78px]"><i class="w-[17px] h-[17px] mr-[7px] bg-[#00ff00]"></i>Band 2: forest_type (Green)</div>
  <div class="h-[22px] flex items-center pl-[78px]"><i class="w-[17px] h-[17px] mr-[7px] bg-[#0000ff]"></i>Band 3: urban-coverfraction (Blue)</div>
  <div class="h-[22px] flex items-center pl-[10px]"><svg class="w-[6px] h-[10px] mr-[12px]" viewBox="0 0 6 10"><path d="M0 0l6 5-6 5z" fill="#606060"/></svg><span class="w-[17px] h-[17px] border border-[#a9a9a9] mr-[7px]"><svg class="w-[15px] h-[15px]"><use href="#ck"/></svg></span><svg class="w-[17px] h-[17px] mr-[8px]"><use href="#ras"/></svg><span class="font-bold text-[14.5px]">Clipped_HRSL_HCMC_Pops_9210</span></div>
  <div class="h-[22px] flex items-center pl-[10px]"><svg class="w-[6px] h-[10px] mr-[12px]" viewBox="0 0 6 10"><path d="M0 0l6 5-6 5z" fill="#606060"/></svg><span class="w-[17px] h-[17px] border border-[#a9a9a9] mr-[7px]"><svg class="w-[15px] h-[15px]"><use href="#ck"/></svg></span><svg class="w-[17px] h-[17px] mr-[8px]"><use href="#ras"/></svg><span class="font-bold text-[14.5px]">Clipped_SRTM_9210</span></div>
  <div class="h-[22px] flex items-center pl-[28px]"><span class="w-[17px] h-[17px] border border-[#a9a9a9] mr-[7px]"><svg class="w-[15px] h-[15px]"><use href="#ck"/></svg></span><i class="w-[18px] h-[18px] mr-[7px] bg-[#deb841] border border-[#a88f3a]"></i><span class="font-bold text-[14.5px]">HCMC_admin_boundary_9210</span></div>
  <div class="h-[22px] flex items-center pl-[8px]"><svg class="w-[10px] h-[6px] mr-[10px]"><use href="#dd"/></svg><span class="w-[17px] h-[17px] border border-[#a9a9a9] mr-[7px]"></span><svg class="w-[17px] h-[17px] mr-[8px]"><use href="#ras"/></svg><span class="font-bold italic text-[#808080] text-[14.5px]">ESRI World Imagery</span></div>
 </div>
 <div class="flex h-[29px] shrink-0 mt-[1px] text-[13.5px] font-['Roboto',sans-serif]">
  <div class="w-[78px] h-[27px] bg-[#e0e0e0] border border-[#c8c8c8] rounded-b-[3px] flex items-center justify-center">Browser</div>
  <div class="w-[65px] h-[29px] bg-[#f9f9f9] border border-[#c8c8c8] border-t-0 rounded-b-[3px] flex items-center justify-center">Layers</div>
 </div>
</section>

<!-- map canvas -->
<section class="w-[930px] h-[807px] shrink-0 bg-white border border-[#bdbdbd] mt-[2px]">
<svg class="w-full h-full" viewBox="415 190 930 807">
<defs>
<filter id="rg3" filterUnits="userSpaceOnUse" x="415" y="190" width="930" height="807" color-interpolation-filters="sRGB"><feTurbulence type="fractalNoise" baseFrequency=".13" numOctaves="2" seed="5" result="n"/><feDisplacementMap in="SourceGraphic" in2="n" scale="7" xChannelSelector="R" yChannelSelector="G"/></filter>
<mask id="om" maskUnits="userSpaceOnUse" x="415" y="190" width="930" height="807"><polygon filter="url(#rg3)" fill="#fff" points="653,203 670,205 670,212 705,218 709,232 724,240 722,255 716,258 729,267 720,285 744,308 761,310 765,302 778,318 789,312 796,317 789,337 811,343 813,353 809,362 826,373 839,372 844,417 870,427 883,453 880,470 891,481 902,480 900,467 902,453 922,463 935,472 935,483 948,480 945,465 952,455 965,473 969,478 991,473 1006,455 1019,449 1030,470 1026,483 1058,527 1060,537 1043,557 1053,570 1045,578 1026,568 1007,583 1002,563 978,585 952,597 937,617 939,637 956,660 974,672 993,693 1007,708 1020,700 1040,698 1050,690 1062,690 1087,725 1110,737 1157,752 1160,730 1180,723 1197,747 1182,775 1197,783 1197,793 1170,820 1165,877 1140,880 1138,890 1158,905 1157,917 1080,957 1015,970 997,933 950,880 930,833 935,817 928,763 913,750 907,730 915,708 900,687 880,688 850,695 810,702 760,690 748,670 748,657 731,653 726,623 707,623 692,617 666,587 705,555 729,447 655,410 614,380 579,383 564,362 583,355 614,348 614,330 625,320 622,297 629,267 633,260 648,223 655,210"/></mask>
<clipPath id="lc"><polygon points="540,190 1250,190 1250,790 1187,807 1170,818 1152,830 1142,867 1122,860 1128,847 1113,860 1118,887 1100,888 1120,890 1137,898 1153,915 1113,937 1067,955 1057,950 1065,938 1050,890 1058,872 1035,877 1035,900 1037,917 1023,927 997,900 963,867 947,840 948,793 937,763 900,750 540,700"/></clipPath>
<clipPath id="zu"><polygon points="540,190 1250,190 1250,600 1045,735 1013,755 997,772 960,790 945,830 925,830 900,700 540,700"/></clipPath>
<clipPath id="zm"><polygon points="672,345 760,335 800,345 845,400 880,440 1025,445 1010,500 975,560 945,610 945,670 900,690 790,680 720,625 722,560 745,450 690,420"/></clipPath>
<filter id="nl" filterUnits="userSpaceOnUse" x="415" y="190" width="930" height="807" color-interpolation-filters="sRGB"><feTurbulence type="fractalNoise" baseFrequency=".075" numOctaves="3" seed="4"/><feColorMatrix values="0 0 0 0 .15 0 0 0 0 0 0 0 0 0 .02 14 0 0 0 -7.1"/></filter>
<filter id="nh" filterUnits="userSpaceOnUse" x="415" y="190" width="930" height="807" color-interpolation-filters="sRGB"><feTurbulence type="fractalNoise" baseFrequency=".38" numOctaves="2" seed="9"/><feColorMatrix values="0 0 0 0 .16 0 0 0 0 0 0 0 0 0 .02 16 0 0 0 -9.4"/></filter>
<filter id="ns" filterUnits="userSpaceOnUse" x="415" y="190" width="930" height="807" color-interpolation-filters="sRGB"><feTurbulence type="fractalNoise" baseFrequency=".42" numOctaves="2" seed="19"/><feColorMatrix values="0 0 0 0 .1 0 0 0 0 0 0 0 0 0 .02 16 0 0 0 -10.7"/></filter>
<filter id="np" filterUnits="userSpaceOnUse" x="415" y="190" width="930" height="807" color-interpolation-filters="sRGB"><feTurbulence type="fractalNoise" baseFrequency=".16" numOctaves="3" seed="21"/><feColorMatrix values="0 0 0 0 .18 0 0 0 0 0 0 0 0 0 .38 18 0 0 0 -10.8"/></filter>
<filter id="nq" filterUnits="userSpaceOnUse" x="415" y="190" width="930" height="807" color-interpolation-filters="sRGB"><feTurbulence type="fractalNoise" baseFrequency=".06" numOctaves="4" seed="27"/><feColorMatrix values="0 0 0 0 .18 0 0 0 0 0 0 0 0 0 .38 16 0 0 0 -7.6"/></filter>
<filter id="nr" filterUnits="userSpaceOnUse" x="415" y="190" width="930" height="807" color-interpolation-filters="sRGB"><feTurbulence type="fractalNoise" baseFrequency=".3" numOctaves="2" seed="31"/><feColorMatrix values="0 0 0 0 .5 0 0 0 0 0 0 0 0 0 0 18 0 0 0 -12.2"/></filter>
<filter id="nk" filterUnits="userSpaceOnUse" x="415" y="190" width="930" height="807" color-interpolation-filters="sRGB"><feTurbulence type="fractalNoise" baseFrequency=".09" numOctaves="3" seed="41"/><feColorMatrix values="0 0 0 0 .14 0 0 0 0 0 0 0 0 0 .03 18 0 0 0 -12.3"/></filter>
<filter id="rg1" filterUnits="userSpaceOnUse" x="415" y="190" width="930" height="807" color-interpolation-filters="sRGB"><feTurbulence type="fractalNoise" baseFrequency=".05" numOctaves="4" seed="7" result="n"/><feDisplacementMap in="SourceGraphic" in2="n" scale="60" xChannelSelector="R" yChannelSelector="G"/></filter>
<filter id="rg2" filterUnits="userSpaceOnUse" x="415" y="190" width="930" height="807" color-interpolation-filters="sRGB"><feTurbulence type="fractalNoise" baseFrequency=".2" numOctaves="2" seed="11" result="n"/><feDisplacementMap in="SourceGraphic" in2="n" scale="9" xChannelSelector="R" yChannelSelector="G"/></filter>
<clipPath id="zb"><path d="M947 842l14 0 40 30 32 8 0 30-12 10-24-22-34-32zM1112 795h20v32h-20z"/></clipPath>
<clipPath id="zt"><path d="M1040 840h100v40h-100zM1090 780h70v50h-70z"/></clipPath>
<clipPath id="zs"><path d="M1072 950l28-22 30-15 22-8 1 10-43 22-30 14zM950 790l8 5-4 25-6-2z"/></clipPath>
</defs>
<g mask="url(#om)">
 <rect x="415" y="190" width="930" height="807" fill="#c80000"/>
 <path d="M1143 878l20-53 5 25-10 28zM1180 803l17-3-6 8z" fill="#6f0000"/>
 <g clip-path="url(#lc)">
  <rect x="415" y="190" width="930" height="807" fill="#720000"/>
  <g clip-path="url(#zu)">
   <rect x="415" y="190" width="930" height="600" filter="url(#nl)"/>
   <rect x="415" y="190" width="930" height="650" filter="url(#nh)"/>
   <rect x="415" y="190" width="930" height="650" filter="url(#np)"/>
   <g filter="url(#rg2)">
    <path d="M644 233h35v24h-35zM590 365l60-8 20 30-40 10-20-15z" fill="#720000"/>
    <path d="M644 267h18v30h-18zM661 257h16v14h-16zM662 310h20v24h-20zM745 378l25 10 30 35-38 2zM735 460l16 4-12 60-8-2zM683 330h20l5 26-22 3z" fill="#280003"/>
    <path d="M650 222l30 90 60 50 70 70 40 30M700 225l-30 80-40 50M790 345l-40 30-60-10-50 10M780 390l50 60" fill="none" stroke="#2e0060" stroke-width="2.5"/>
   </g>
   <g clip-path="url(#zm)"><rect x="415" y="190" width="930" height="807" filter="url(#nq)"/></g>
   <g filter="url(#rg1)">
    <path d="M775 475l70-15 50 35 25-15 60 5-30 45-25 50-25 25 10 45-30 30-60-5-45-45 10-60z" fill="#2e0060"/>
   </g>
   <g filter="url(#rg2)"><path d="M745 378l25 10 30 35-38 2z" fill="#280003"/></g>
   <rect x="700" y="440" width="320" height="250" filter="url(#nr)" opacity=".8"/>
   <rect x="700" y="440" width="320" height="250" filter="url(#nk)" opacity=".8"/>
   <path d="M840 510l25 10-39 17 5-14z" fill="#280003"/>
  </g>
  <g fill="none" stroke="#560000">
   <path d="M923 667l20 13 17 40 7 27-20 10-17-7" stroke-width="8" stroke="#5c0000"/>
   <path d="M1037 712l8 15-2 16-36 7-27-3" stroke-width="6" stroke="#5c0000"/>
   <path d="M1015 753l3 20 9 15 26 22 27 5 13-13 20 3 12 18 3 20" stroke-width="5"/>
   <path d="M1093 802l-10-14-13-21-17-24M1110 773l-17-10-23-6M1110 773l-3 17-14 12" stroke-width="2.5"/>
   <path d="M1158 760l-3 13 5 24 17 5M1175 803l-22 20-10 40" stroke-width="5"/>
   <path d="M1047 847l-4 10 14 13M1007 860l30 13M1047 833l-20-3-20-3M1000 840l20 2" stroke-width="3"/>
   <path d="M1110 737l-4 13 30 5 20 15" stroke-width="2"/>
  </g>
  <g clip-path="url(#zb)"><rect x="415" y="190" width="930" height="807" filter="url(#ns)"/><rect x="415" y="190" width="930" height="807" filter="url(#nk)"/></g>
  <g clip-path="url(#zt)"><rect x="415" y="190" width="930" height="807" filter="url(#ns)"/></g>
  <g clip-path="url(#zs)"><rect x="415" y="190" width="930" height="807" fill="#3a0030"/><rect x="415" y="190" width="930" height="807" filter="url(#nl)"/></g>
 </g>
</g>
</svg>
</section>

<!-- right dock -->
<section class="w-[575px] shrink-0 flex flex-col pl-[10px] relative font-['Roboto',sans-serif] text-[13.5px]">
 <div class="h-[24px] shrink-0 flex items-center pl-[2px] pt-[2px] text-[14.5px]">Layer Styling
  <svg class="ml-auto w-[11px] h-[11px]" viewBox="0 0 11 11"><rect x=".5" y=".5" width="10" height="10" rx="1" fill="#e8e8e8" stroke="#666"/><path d="M5 2h4v5H7M2.5 4.5h4v4h-4z" fill="none" stroke="#666"/></svg>
  <svg class="ml-[2px] mr-[1px] w-[11px] h-[11px]" viewBox="0 0 11 11"><rect x=".5" y=".5" width="10" height="10" rx="1" fill="#e8e8e8" stroke="#666"/><path d="M3 3l5 5M8 3L3 8" stroke="#333" stroke-width="1.4"/></svg>
 </div>
 <div class="w-[562px] h-[27px] shrink-0 rounded-[3px] border border-[#c0c0c0] bg-linear-to-b from-white to-[#f1f1f1] flex items-center pl-[7px]"><svg class="w-[17px] h-[17px] mr-[4px]"><use href="#ras"/></svg>Clipped_LandCover_2019_9210<svg class="ml-auto mr-[9px] w-[12px] h-[7px]"><use href="#dd"/></svg></div>
 <div class="h-[716px] shrink-0 mt-[8px] flex">
  <div class="w-[38px] shrink-0 flex flex-col">
   <div class="h-[32px] flex items-center justify-center pr-[4px]"><svg class="w-[24px] h-[24px]"><use href="#brush"/></svg></div>
   <div class="flex-1 bg-[#606060] flex flex-col items-center pt-[7px] pr-[7px] gap-[8px]">
    <svg class="w-[23px] h-[23px]" viewBox="0 0 23 23"><rect x="1" y="1" width="21" height="16" fill="#c3d4e8"/><path d="M4 5l8-2 6 3-4 4-4-1-3 4z" fill="#6f96c2"/><rect y="19" width="23" height="2" fill="#ddd"/></svg>
    <svg class="w-[23px] h-[23px]" viewBox="0 0 23 23"><rect x="1" y="4" width="21" height="15" fill="#dfe5ea" stroke="#aaa"/><path d="M3 15l5-6 4 5 3-3 5 5" fill="none" stroke="#7b8fa3"/></svg>
    <svg class="w-[23px] h-[25px]" viewBox="0 0 23 25"><rect x="7" width="9" height="9" fill="#d85a5a"/><path d="M5 9v7M11.5 9v7M18 9v7M5 12h13" stroke="#e59b2f" stroke-width="2"/><rect y="15" width="10" height="9" fill="#edd05a"/><rect x="13" y="15" width="10" height="9" fill="#6a9bd1"/></svg>
    <svg class="w-[22px] h-[23px]" viewBox="0 0 22 23"><path d="M9 1L2 7l7 6v-4c4 0 5 1 6 4 1-6-2-8-6-8z" fill="#6ba56b"/><path d="M13 9l7 6-7 6v-4c-3 0-5 1-6-2 2 0 4-2 6-2z" fill="#e17b33"/></svg>
   </div>
  </div>
  <div class="flex flex-col flex-1 min-w-0">
   <div class="flex h-[683px] shrink-0">
    <div class="w-[504px] ml-[3px] shrink-0 overflow-hidden">
     <div class="h-[27px] rounded-[3px] border border-[#c0c0c0] bg-linear-to-b from-white to-[#f1f1f1] flex items-center pl-[7px]"><svg class="w-[16px] h-[16px] mr-[5px]" viewBox="0 0 16 16"><rect width="16" height="16" fill="#111"/><rect x="1" y="1" width="14" height="4.5" fill="#b00"/><rect x="1" y="5.5" width="14" height="5" fill="#0a0"/><rect x="1" y="10.5" width="14" height="4.5" fill="#00b"/></svg>Multiband color<svg class="ml-auto mr-[9px] w-[12px] h-[7px]"><use href="#dd"/></svg></div>
     <div class="mt-[8px] flex items-center h-[23px]"><span class="w-[84px] shrink-0">Red band</span><div class="flex-1 h-full rounded-[3px] border border-[#c0c0c0] bg-linear-to-b from-white to-[#f1f1f1] flex items-center pl-[4px]">Band 1: discrete_classification (Red)<svg class="ml-auto mr-[9px] w-[12px] h-[7px]"><use href="#dd"/></svg></div></div>
     <div class="mt-[8px] flex items-center h-[24px] pl-[84px]"><span class="w-[27px]">Min</span><div class="w-[178px] h-full rounded-[2px] border border-[#c0c0c0] bg-white pl-[2px] flex items-center">20</div><span class="ml-[7px] w-[30px]">Max</span><div class="flex-1 h-full rounded-[2px] border border-[#c0c0c0] bg-white pl-[2px] flex items-center">200</div></div>
     <div class="mt-[8px] flex items-center h-[23px]"><span class="w-[84px] shrink-0">Green band</span><div class="flex-1 h-full rounded-[3px] border border-[#c0c0c0] bg-linear-to-b from-white to-[#f1f1f1] flex items-center pl-[4px]">Band 2: forest_type (Green)<svg class="ml-auto mr-[9px] w-[12px] h-[7px]"><use href="#dd"/></svg></div></div>
     <div class="mt-[7px] flex items-center h-[24px] pl-[84px]"><span class="w-[27px]">Min</span><div class="w-[178px] h-full rounded-[2px] border border-[#c0c0c0] bg-white pl-[2px] flex items-center">0</div><span class="ml-[7px] w-[30px]">Max</span><div class="flex-1 h-full rounded-[2px] border border-[#c0c0c0] bg-white pl-[2px] flex items-center">2</div></div>
     <div class="mt-[8px] flex items-center h-[23px]"><span class="w-[84px] shrink-0">Blue band</span><div class="flex-1 h-full rounded-[3px] border border-[#c0c0c0] bg-linear-to-b from-white to-[#f1f1f1] flex items-center pl-[4px]">Band 3: urban-coverfraction (Blue)<svg class="ml-auto mr-[9px] w-[12px] h-[7px]"><use href="#dd"/></svg></div></div>
     <div class="mt-[7px] flex items-center h-[24px] pl-[84px]"><span class="w-[27px]">Min</span><div class="w-[178px] h-full rounded-[2px] border border-[#c0c0c0] bg-white pl-[2px] flex items-center">0</div><span class="ml-[7px] w-[30px]">Max</span><div class="flex-1 h-full rounded-[2px] border border-[#c0c0c0] bg-white pl-[2px] flex items-center">100</div></div>
     <div class="mt-[11px] flex items-center h-[24px]"><span class="w-[84px] shrink-0 leading-[16px] -mt-[1px]">Contrast enhancement</span><div class="flex-1 h-full rounded-[3px] border border-[#c0c0c0] bg-linear-to-b from-white to-[#f1f1f1] flex items-center pl-[4px]">No Enhancement<svg class="ml-auto mr-[9px] w-[12px] h-[7px]"><use href="#dd"/></svg></div></div>
     <div class="mt-[10px] h-[20px] flex items-center pl-[5px] font-bold font-['Noto_Sans',sans-serif] text-[13px]"><svg class="w-[7px] h-[11px] mr-[11px]" viewBox="0 0 7 11"><path d="M0 0l7 5.5-7 5.5z" fill="#444"/></svg>Min / Max Value Settings</div>
     <div class="mt-[10px] h-[20px] flex items-center pl-[2px] font-bold font-['Noto_Sans',sans-serif] text-[13.2px]">Layer Rendering</div>
     <div class="mt-[1px] ml-[1px] h-[303px] border border-[#dcdcdc] rounded-[2px] bg-[#eeeeee] pl-[12px] pr-[12px] pt-[12px]">
      <div class="flex items-center h-[23px]"><span class="w-[91px] shrink-0 whitespace-nowrap">Blending mode</span><div class="flex-1 h-full rounded-[3px] border border-[#c0c0c0] bg-linear-to-b from-white to-[#f1f1f1] flex items-center pl-[4px]">Normal<svg class="ml-auto mr-[9px] w-[12px] h-[7px]"><use href="#dd"/></svg></div></div>
      <div class="mt-[9px] flex items-center h-[22px]"><span class="w-[92px] shrink-0">Brightness</span><div class="relative w-[287px] h-[6px] rounded-[3px] bg-[#cfcfcf] border border-[#bdbdbd]"><div class="w-[136px] h-full bg-[#0a78d1] rounded-l-[3px]"></div><div class="absolute left-[136px] -top-[8px] w-[16px] h-[20px] rounded-[3px] bg-[#f7f7f7] border border-[#bdbdbd]"></div></div><div class="ml-[8px] flex-1 h-full rounded-[2px] border border-[#c0c0c0] bg-white flex items-center pl-[4px]">0<span class="ml-auto w-[18px] h-full border-l border-[#c0c0c0] bg-[#f4f4f4] flex flex-col items-center justify-center gap-[2px]"><svg class="w-[9px] h-[5px] rotate-180"><use href="#dd"/></svg><svg class="w-[9px] h-[5px]"><use href="#dd"/></svg></span></div></div>
      <div class="mt-[9px] flex items-center h-[22px]"><span class="w-[92px] shrink-0">Saturation</span><div class="relative w-[287px] h-[6px] rounded-[3px] bg-[#cfcfcf] border border-[#bdbdbd]"><div class="w-[136px] h-full bg-[#0a78d1] rounded-l-[3px]"></div><div class="absolute left-[136px] -top-[8px] w-[16px] h-[20px] rounded-[3px] bg-[#f7f7f7] border border-[#bdbdbd]"></div></div><div class="ml-[8px] flex-1 h-full rounded-[2px] border border-[#c0c0c0] bg-white flex items-center pl-[4px]">0<span class="ml-auto w-[18px] h-full border-l border-[#c0c0c0] bg-[#f4f4f4] flex flex-col items-center justify-center gap-[2px]"><svg class="w-[9px] h-[5px] rotate-180"><use href="#dd"/></svg><svg class="w-[9px] h-[5px]"><use href="#dd"/></svg></span></div></div>
      <div class="mt-[9px] flex items-center h-[22px]"><span class="w-[92px] shrink-0">Contrast</span><div class="relative w-[287px] h-[6px] rounded-[3px] bg-[#cfcfcf] border border-[#bdbdbd]"><div class="w-[136px] h-full bg-[#0a78d1] rounded-l-[3px]"></div><div class="absolute left-[136px] -top-[8px] w-[16px] h-[20px] rounded-[3px] bg-[#f7f7f7] border border-[#bdbdbd]"></div></div><div class="ml-[8px] flex-1 h-full rounded-[2px] border border-[#c0c0c0] bg-white flex items-center pl-[4px]">0<span class="ml-auto w-[18px] h-full border-l border-[#c0c0c0] bg-[#f4f4f4] flex flex-col items-center justify-center gap-[2px]"><svg class="w-[9px] h-[5px] rotate-180"><use href="#dd"/></svg><svg class="w-[9px] h-[5px]"><use href="#dd"/></svg></span></div></div>
      <div class="mt-[9px] flex items-center h-[22px]"><span class="w-[92px] shrink-0">Gamma</span><div class="relative w-[287px] h-[6px] rounded-[3px] bg-[#cfcfcf] border border-[#bdbdbd]"><div class="w-[25px] h-full bg-[#0a78d1] rounded-l-[3px]"></div><div class="absolute left-[25px] -top-[8px] w-[16px] h-[20px] rounded-[3px] bg-[#f7f7f7] border border-[#bdbdbd]"></div></div><div class="ml-[8px] flex-1 h-full rounded-[2px] border border-[#c0c0c0] bg-white flex items-center pl-[4px]">1.00<span class="ml-auto w-[18px] h-full border-l border-[#c0c0c0] bg-[#f4f4f4] flex flex-col items-center justify-center gap-[2px]"><svg class="w-[9px] h-[5px] rotate-180"><use href="#dd"/></svg><svg class="w-[9px] h-[5px]"><use href="#dd"/></svg></span></div></div>
      <div class="mt-[8px] flex items-center h-[23px]"><span class="w-[91px] shrink-0">Grayscale</span><div class="flex-1 h-full rounded-[3px] border border-[#c0c0c0] bg-linear-to-b from-white to-[#f1f1f1] flex items-center pl-[4px]">Off<svg class="ml-auto mr-[9px] w-[12px] h-[7px]"><use href="#dd"/></svg></div></div>
      <div class="mt-[9px] flex">
       <span class="w-[91px] shrink-0 self-start mt-[19px]">Hue</span>
       <div class="flex-1 min-w-0">
        <div class="flex items-center h-[24px]"><i class="w-[17px] h-[17px] bg-white border border-[#a9a9a9] mr-[6px]"></i>Colorize<div class="ml-auto w-[85px] h-[25px] rounded-[3px] border border-[#c8c8c8] bg-[#f2f2f2] p-[2px]"><div class="w-full h-full rounded-[2px] bg-[#e9e5e5]"></div></div><div class="ml-[1px] w-[15px] h-[25px] rounded-[2px] border border-[#c8c8c8] flex items-center justify-center"><svg class="w-[8px] h-[5px] opacity-50"><use href="#dd"/></svg></div></div>
        <div class="mt-[10px] flex items-center h-[21px]"><span class="w-[144px] shrink-0">Strength</span><div class="relative w-[146px] h-[6px] rounded-[3px] bg-[#0a78d1] border border-[#3b7fb8]"><div class="absolute left-[146px] -top-[8px] w-[16px] h-[20px] rounded-[3px] bg-[#f7f7f7] border border-[#bdbdbd]"></div></div><div class="ml-[25px] flex-1 h-full rounded-[2px] border border-[#c8c8c8] bg-[#eeeeee] text-[#777] flex items-center pl-[4px]">100%<span class="ml-auto w-[18px] h-full border-l border-[#c8c8c8] flex flex-col items-center justify-center gap-[2px]"><svg class="w-[9px] h-[5px] rotate-180 opacity-40"><use href="#dd"/></svg><svg class="w-[9px] h-[5px] opacity-40"><use href="#dd"/></svg></span></div></div>
        <button class="mt-[8px] w-[72px] h-[26px] rounded-[3px] border border-[#c0c0c0] bg-[#f3f3f3] flex items-center pl-[6px]"><svg class="w-[18px] h-[18px] mr-[6px]"><use href="#uo"/></svg>Reset</button>
       </div>
      </div>
     </div>
     <div class="mt-[8px] h-[20px] flex items-center pl-[2px] font-bold font-['Noto_Sans',sans-serif] text-[13.2px]">Resampling</div>
     <div class="mt-[1px] ml-[1px] h-[60px] border border-[#dcdcdc] rounded-[2px] pl-[12px] pr-[12px] pt-[12px]"><div class="flex items-center h-[23px]"><span class="w-[243px] shrink-0">Zoomed in</span><div class="flex-1 h-full rounded-[3px] border border-[#c0c0c0] bg-linear-to-b from-white to-[#f1f1f1] flex items-center pl-[4px]">Nearest Neighbour<svg class="ml-auto mr-[9px] w-[12px] h-[7px]"><use href="#dd"/></svg></div></div></div>
    </div>
    <div class="ml-[1px] w-[19px] shrink-0 bg-white border-x border-[#e4e4e4] flex flex-col">
     <div class="h-[17px] flex items-center justify-center border-b border-[#d8d8d8]"><svg class="w-[9px] h-[5px] rotate-180"><use href="#dd"/></svg></div>
     <div class="h-[570px]"></div>
     <div class="flex-1 bg-[#e6e6e6]"></div>
     <div class="h-[17px] flex items-center justify-center"><svg class="w-[9px] h-[5px]"><use href="#dd"/></svg></div>
    </div>
   </div>
   <div class="h-[33px] flex items-start pt-[7px] pl-[3px] pr-[3px]">
    <button class="w-[28px] h-[27px] rounded-[3px] border border-[#c0c0c0] bg-[#f3f3f3] flex items-center justify-center"><svg class="w-[17px] h-[17px]"><use href="#uo"/></svg></button>
    <button class="ml-[6px] w-[28px] h-[27px] rounded-[3px] border border-[#c0c0c0] bg-[#f3f3f3] flex items-center justify-center"><svg class="w-[17px] h-[17px]"><use href="#rg"/></svg></button>
    <span class="ml-auto mt-[5px] w-[17px] h-[17px] bg-white border border-[#a9a9a9] mr-[6px]"><svg class="w-[15px] h-[15px]"><use href="#ck"/></svg></span><span class="mt-[4px] text-[14px]">Live update</span>
    <button class="ml-[12px] mt-[1px] w-[80px] h-[25px] rounded-[3px] border border-[#c0c0c0] bg-[#f5f5f5]">Apply</button>
   </div>
  </div>
 </div>
 <div class="flex h-[29px] shrink-0 mt-[5px] -ml-[2px] border-t border-[#d0d0d0]">
  <div class="w-[103px] h-[28px] bg-[#f4f4f4] border border-[#c8c8c8] border-t-0 rounded-b-[3px] flex items-center justify-center">Layer Styling</div>
  <div class="w-[139px] h-[26px] bg-[#e0e0e0] border border-[#c8c8c8] border-t-0 rounded-b-[3px] flex items-center justify-center">Processing Toolbox</div>
 </div>
</section>
</main>

<!-- status bar -->
<footer class="h-[30px] shrink-0 flex items-center relative text-[13px] font-['Roboto',sans-serif]">
 <div class="ml-[5px] w-[230px] h-[22px] rounded-[3px] bg-white border border-[#c0c0c0] flex items-center pl-[7px] text-[#777]"><svg class="w-[14px] h-[14px] mr-[6px]" viewBox="0 0 14 14"><circle cx="5.5" cy="5.5" r="4.5" fill="none" stroke="#999" stroke-width="1.3"/><path d="M9 9l4 4" stroke="#999" stroke-width="1.5"/></svg>Type to locate (Ctrl+K)</div>
 <div class="absolute left-[303px] bottom-0 w-[76px] h-[25px] bg-white border border-[#6a6a6a] border-b-0 shadow-[3px_2px_3px_rgba(0,0,0,0.3)] flex items-center justify-center text-[15px] text-[#5d7f9f]">Module 9</div>
 <span class="ml-[754px] w-[65px] whitespace-nowrap">Coordinate</span>
 <div class="w-[110px] h-[23px] bg-white border border-[#c0c0c0] rounded-[2px] flex items-center justify-center">607325,1207476</div>
 <span class="w-[37px] flex justify-center"><svg class="w-[20px] h-[22px]" viewBox="0 0 20 22"><path d="M4 3c5-2 10 2 10 8s-2 10-5 9-7-7-7-11 0-5 2-6z" fill="#222"/><path d="M6 7l6 4M5 11l7 3M7 15l4 2" stroke="#fff"/><path d="M13 3l5-2-2 5" stroke="#222" fill="none"/></svg></span>
 <span class="w-[34px]">Scale</span>
 <div class="w-[92px] h-[23px] bg-white border border-[#c0c0c0] rounded-[2px] flex items-center pl-[3px]">1:547851<span class="ml-auto w-[25px] h-full bg-[#efefef] flex items-center justify-center"><svg class="w-[10px] h-[6px]"><use href="#dd"/></svg></span></div>
 <svg class="ml-[13px] w-[16px] h-[20px]" viewBox="0 0 16 20"><path d="M4 9V5a4 4 0 0 1 8 0v4" fill="none" stroke="#666" stroke-width="1.8"/><rect x="1" y="9" width="14" height="11" fill="#666"/></svg>
 <span class="ml-[9px] w-[56px]">Magnifier</span>
 <div class="w-[92px] h-[23px] bg-white border border-[#c0c0c0] rounded-[2px] flex items-center pl-[4px]">100%<span class="ml-auto w-[18px] h-full border-l border-[#c0c0c0] bg-[#f4f4f4] flex flex-col items-center justify-center gap-[2px]"><svg class="w-[9px] h-[5px] rotate-180"><use href="#dd"/></svg><svg class="w-[9px] h-[5px]"><use href="#dd"/></svg></span></div>
 <span class="ml-[10px] w-[57px]">Rotation</span>
 <div class="w-[88px] h-[23px] bg-white border border-[#c0c0c0] rounded-[2px] flex items-center pl-[4px]">0.0 °<span class="ml-auto w-[18px] h-full border-l border-[#c0c0c0] bg-[#f4f4f4] flex flex-col items-center justify-center gap-[2px]"><svg class="w-[9px] h-[5px] rotate-180"><use href="#dd"/></svg><svg class="w-[9px] h-[5px]"><use href="#dd"/></svg></span></div>
 <span class="ml-[6px] w-[17px] h-[17px] bg-white border border-[#a9a9a9]"><svg class="w-[15px] h-[15px]"><use href="#ck"/></svg></span>
 <span class="ml-[6px] w-[58px]">Render</span>
 <svg class="w-[18px] h-[18px]" viewBox="0 0 18 18"><circle cx="9" cy="9" r="7.5" fill="none" stroke="#666" stroke-width="1.3"/><path d="M1 9h16M9 1v16M3 4c4 2 8 2 12 0M3 14c4-2 8-2 12 0M9 1c-5 4-5 12 0 16M9 1c5 4 5 12 0 16" fill="none" stroke="#666"/></svg>
 <span class="ml-[7px] w-[83px]">EPSG:9210</span>
 <svg class="w-[18px] h-[20px]" viewBox="0 0 18 20"><path d="M9 1c5 0 8 3 8 7s-3 7-8 7v4l-4-5c-3-1-4-3-4-6 0-4 3-7 8-7z" fill="#555"/><circle cx="5.5" cy="8" r="1.2" fill="#fff"/><circle cx="9" cy="8" r="1.2" fill="#fff"/><circle cx="12.5" cy="8" r="1.2" fill="#fff"/></svg>
 <svg class="ml-[17px] w-[21px] h-[21px]" viewBox="0 0 21 21"><path d="M4 6h5c-1-3 3-5 5-2l1 2h4v5c-3-1-5 3-2 5l2 1v3H4v-4c3 1 5-3 2-5l-2-1z" fill="#ccc" stroke="#555"/></svg>
</footer>
</body></html>
